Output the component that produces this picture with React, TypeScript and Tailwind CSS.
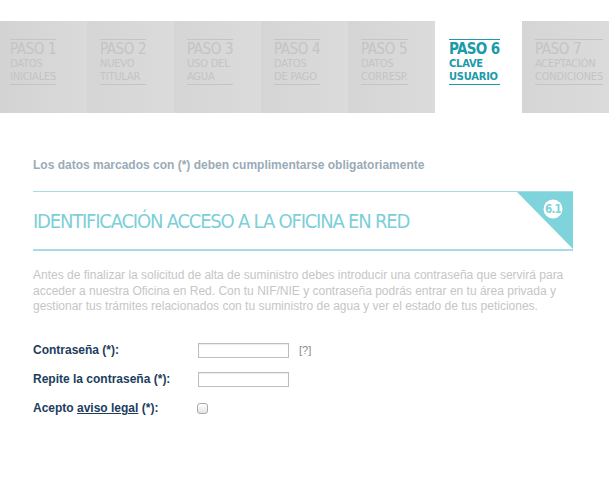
const STEPS = [
  { n: "PASO 1", a: "DATOS", b: "INICIALES" },
  { n: "PASO 2", a: "NUEVO", b: "TITULAR" },
  { n: "PASO 3", a: "USO DEL", b: "AGUA" },
  { n: "PASO 4", a: "DATOS", b: "DE PAGO" },
  { n: "PASO 5", a: "DATOS", b: "CORRESP." },
  { n: "PASO 6", a: "CLAVE", b: "USUARIO", active: true },
  { n: "PASO 7", a: "ACEPTACIÓN", b: "CONDICIONES" },
];

const cond = "font-['DejaVu_Sans_Condensed','DejaVu_Sans',sans-serif]";

export default function App() {
  return (
    <div className="w-[609px] h-[482px] bg-white font-['Liberation_Sans',Arial,sans-serif] overflow-hidden">
      {/* steps bar */}
      <div className="mt-[21px] grid grid-cols-7 h-[92px] bg-[#d8d8d8]">
        {STEPS.map((s, i) => (
          <div
            key={s.n}
            className={
              s.active
                ? "bg-white pl-[14px] pt-[18px]"
                : i === 0
                ? "bg-gradient-to-r from-[#d3d3d3] to-[#dadada] pl-[10px] pt-[18px]"
                : "bg-gradient-to-r from-[#d5d5d5] to-[#dbdbdb] pl-[13px] pt-[18px]"
            }
          >
            <div
              className={`inline-block border-t border-b ${cond} ${
                s.active
                  ? "border-[#1b9aaa] text-[#1b9aaa] font-bold"
                  : "border-[#c4c4c4] text-[#c4c4c4] font-normal"
              }`}
            >
              <div className={`text-[15px] leading-[17px] pt-px ${s.active ? "tracking-[-0.6px]" : "tracking-[-0.4px]"}`}>{s.n}</div>
              <div className="text-[11px] leading-[12px] tracking-[-0.2px]">{s.a}</div>
              <div className="text-[11px] leading-[13px] pb-px tracking-[-0.2px]">{s.b}</div>
            </div>
          </div>
        ))}
      </div>

      <div className="px-[33px] w-[573px] box-content">
        <p className="mt-[45px] text-[12px] font-bold text-[#9aabb8] leading-[15px]">
          Los datos marcados con (*) deben cumplimentarse obligatoriamente
        </p>

        {/* section header */}
        <div className="mt-[18px] w-[540px] relative border-t border-[#a6dde2] border-b-2 border-b-[#a6dde2] h-[60px] flex items-center">
          <h1 className={`${cond} text-[20px] tracking-[-1.2px] text-[#7ccfd7] leading-none mt-[1px]`}>
            IDENTIFICACIÓN ACCESO A LA OFICINA EN RED
          </h1>
          <svg className="absolute right-0 top-0" width="56" height="57" viewBox="0 0 56 57">
            <polygon points="0,0 56,0 56,57" fill="#7fd3da" />
            <circle cx="36" cy="17" r="9.5" fill="#fff" />
            <text x="36" y="21" textAnchor="middle" fontSize="11.5" fontWeight="bold" letterSpacing="-0.8" fill="#7fd3da" fontFamily="DejaVu Sans Condensed, DejaVu Sans, sans-serif">
              6.1
            </text>
          </svg>
        </div>

        <p className="mt-[17px] w-[545px] text-[12px] leading-[15.5px] text-[#c6c6c6]">
          Antes de finalizar la solicitud de alta de suministro debes introducir una contraseña que servirá para acceder a nuestra Oficina en Red. Con tu NIF/NIE y contraseña podrás entrar en tu área privada y gestionar tus trámites relacionados con tu suministro de agua y ver el estado de tus peticiones.
        </p>

        {/* form */}
        <div className="mt-[28px] flex flex-col gap-[14px] text-[12px] font-bold text-[#1c3d5e]">
          <div className="flex items-center h-[15px]">
            <span className="w-[165px]">Contraseña (*):</span>
            <input type="password" className="w-[91px] h-[15px] border border-[#bdbdbd] shadow-[inset_0_1px_1px_rgba(0,0,0,0.08)] bg-white" />
            <span className="ml-[10px] text-[11px] font-normal text-[#8a8a8a]">[?]</span>
          </div>
          <div className="flex items-center h-[15px]">
            <span className="w-[165px]">Repite la contraseña (*):</span>
            <input type="password" className="w-[91px] h-[15px] border border-[#bdbdbd] shadow-[inset_0_1px_1px_rgba(0,0,0,0.08)] bg-white" />
          </div>
          <div className="flex items-center h-[15px]">
            <span className="w-[164px]">
              Acepto <span className="underline">aviso legal</span> (*):
            </span>
            <span className="w-[11px] h-[11px] rounded-[3px] border border-[#a9a9a9] bg-gradient-to-b from-white to-[#e4e4e4]" />
          </div>
        </div>
      </div>
    </div>
  );
}
